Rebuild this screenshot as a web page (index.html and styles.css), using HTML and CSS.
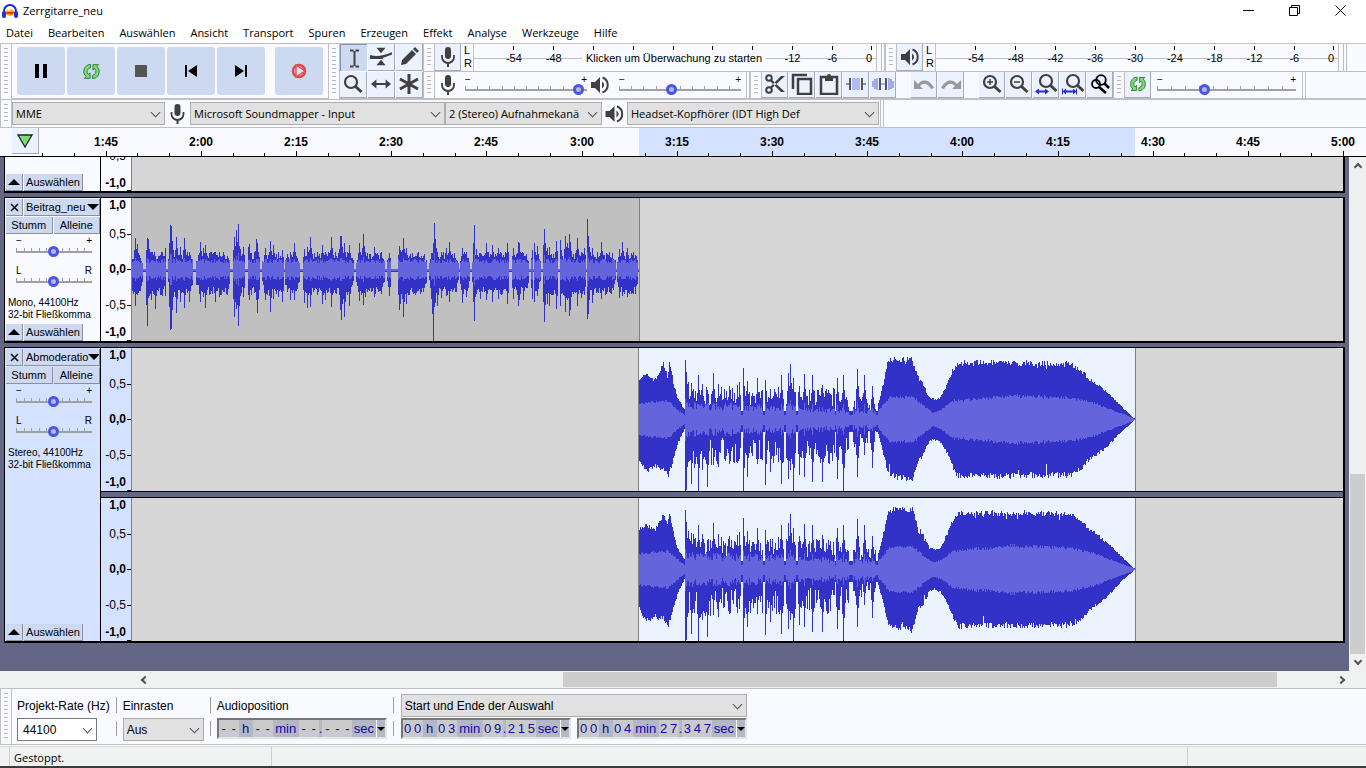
FILE: index.html
```html
<!DOCTYPE html>
<html lang="de">
<head>
<meta charset="utf-8">
<title>Zerrgitarre_neu</title>
<link rel="stylesheet" href="styles.css">
</head>
<body>
<svg class="defs" aria-hidden="true">
  <symbol id="mic" viewBox="0 0 16 20"><rect x="5" y="0" width="6" height="12" rx="3"/><path d="M2 8v2a6 6 0 0 0 12 0V8" fill="none" stroke="currentColor" stroke-width="1.8"/><path d="M7 15h2v5H7z"/></symbol>
  <symbol id="speaker" viewBox="0 0 20 20"><path d="M1 7h4l5-5v16l-5-5H1z"/><path d="M12 6.500a4 4 0 0 1 0 7z"/><path d="M12.500 2.500a8 8 0 0 1 0 15" fill="none" stroke="currentColor" stroke-width="2"/></symbol>
  <symbol id="loop" viewBox="0 0 18 18"><path d="M8 1.500A7.500 7.500 0 0 0 3.200 14.500L1.500 16.200H7.500V10.500L5.600 12.200A4.300 4.300 0 0 1 8 4.900z" fill="#7cdc78" stroke="#2f7a30"/><path d="M10 16.500A7.500 7.500 0 0 0 14.800 3.500L16.500 1.800H10.500V7.500L12.400 5.800A4.300 4.300 0 0 1 10 13.100z" fill="#7cdc78" stroke="#2f7a30"/></symbol>
  <symbol id="lens" viewBox="0 0 22 22"><circle cx="9" cy="9" r="6" fill="none" stroke="currentColor" stroke-width="2.200"/><path d="M13.500 13.500l6 5.500" stroke="currentColor" stroke-width="3"/></symbol>
</svg>

<header class="titlebar">
  <svg class="app-icon" viewBox="0 0 16 16"><path d="M3 9l2-2 2 1 2-2 3 2 2 1-2 3-4 1-4-1z" fill="#ffb000"/><path d="M4 9h8l-1 2H5z" fill="#f03010"/><path d="M2 10V8a6 6 0 0 1 12 0v2" fill="none" stroke="#1c22d0" stroke-width="2"/><rect x="0" y="8" width="4" height="7" rx="2" fill="#1c30f0"/><rect x="12" y="8" width="4" height="7" rx="2" fill="#1c30f0"/></svg>
  <h1>Zerrgitarre_neu</h1>
  <div class="window-buttons">
    <button aria-label="Minimieren"><svg viewBox="0 0 11 11"><path d="M0 5.500h11"/></svg></button>
    <button aria-label="Wiederherstellen"><svg viewBox="0 0 11 11"><path d="M.5 2.500h8v8h-8zM2.500 2.500v-2h8v8h-2"/></svg></button>
    <button aria-label="Schließen"><svg viewBox="0 0 11 11"><path d="M.5.5l10 10M10.500.5l-10 10"/></svg></button>
  </div>
</header>
<nav class="menubar">
  <button>Datei</button><button>Bearbeiten</button><button>Auswählen</button><button>Ansicht</button><button>Transport</button><button>Spuren</button><button>Erzeugen</button><button>Effekt</button><button>Analyse</button><button>Werkzeuge</button><button>Hilfe</button>
</nav>

<section class="toolbars">
  <div class="upper">
    <div class="grip"></div>
    <div class="transport">
      <button aria-label="Pause"><svg viewBox="0 0 20 20"><path d="M4 3h4v14H4zM12 3h4v14h-4z" fill="#000"/></svg></button>
      <button aria-label="Schleife"><svg viewBox="0 0 18 18"><use href="#loop"/></svg></button>
      <button aria-label="Stopp"><svg viewBox="0 0 20 20"><path d="M4 4h12v12H4z" fill="#555"/></svg></button>
      <button aria-label="Zum Anfang"><svg viewBox="0 0 20 20"><path d="M4 4h2v12H4zM16 4v12l-9-6z" fill="#000"/></svg></button>
      <button aria-label="Zum Ende"><svg viewBox="0 0 20 20"><path d="M14 4h2v12h-2zM4 4v12l9-6z" fill="#000"/></svg></button>
      <button class="record" aria-label="Aufnahme"><svg viewBox="0 0 20 20"><circle cx="10" cy="10" r="6" fill="none" stroke="#e04848" stroke-width="2.500"/><path d="M7 4l9 6-9 6z" fill="#dde2f4" stroke="#e04848" stroke-width="1.300"/></svg></button>
    </div>
    <div class="grip"></div>
    <div class="tools">
      <button class="pressed" aria-label="Auswahlwerkzeug"><svg viewBox="0 0 22 22"><path d="M7 3.500h3.500M12.500 3.500H16M7 19.500h3.500M12.500 19.500H16M11.500 4v15" fill="none" stroke="currentColor" stroke-width="2"/></svg></button>
      <button aria-label="Hüllkurve"><svg viewBox="0 0 24 22"><path d="M7 1h10l-5 6zM7 20h10l-5-6z"/><path d="M0 10c8 3 15 1 24-3M0 12h14" fill="none" stroke="currentColor" stroke-width="2.500"/></svg></button>
      <button aria-label="Zeichnen"><svg viewBox="0 0 22 22"><path d="M3 19l1-5L14 4l4 4L8 18zM15 3l2-2 4 4-2 2z"/></svg></button>
      <button aria-label="Zoom"><svg viewBox="0 0 22 22"><use href="#lens"/></svg></button>
      <button aria-label="Verschieben"><svg viewBox="0 0 24 22"><path d="M1 11l6-5v4h10V6l6 5-6 5v-4H7v4z"/></svg></button>
      <button aria-label="Multiwerkzeug"><svg viewBox="0 0 22 22"><path d="M11 1v20M2 6l18 10M2 16L20 6" stroke="currentColor" stroke-width="3"/></svg></button>
    </div>
    <div class="bars">
      <div class="bar">
        <div class="grip"></div>
        <button class="tool" aria-label="Aufnahmepegel"><svg viewBox="0 0 16 20"><use href="#mic"/></svg></button>
        <div class="lr"><span>L</span><span>R</span></div>
        <div class="meter">
          <span>-54</span><span>-48</span><span></span><span></span><span></span><span></span><span></span><span>-12</span><span>-6</span><span>0</span>
          <p class="hint">Klicken um Überwachung zu starten</p>
        </div>
        <div class="end"></div>
        <div class="grip"></div>
        <button class="tool" aria-label="Wiedergabepegel"><svg viewBox="0 0 20 20"><use href="#speaker"/></svg></button>
        <div class="lr"><span>L</span><span>R</span></div>
        <div class="meter">
          <span>-54</span><span>-48</span><span>-42</span><span>-36</span><span>-30</span><span>-24</span><span>-18</span><span>-12</span><span>-6</span><span>0</span>
        </div>
        <div class="end"></div>
      </div>
      <div class="bar">
        <div class="grip"></div>
        <svg class="mark" viewBox="0 0 16 20"><use href="#mic"/></svg>
        <label class="slider wide"><span>−</span><span>+</span><input type="range" aria-label="Aufnahmelautstärke" value="97"></label>
        <svg class="mark" viewBox="0 0 20 20"><use href="#speaker"/></svg>
        <label class="slider wide"><span>−</span><span>+</span><input type="range" aria-label="Wiedergabelautstärke" value="42"></label>
        <div class="end"></div>
        <div class="grip"></div>
        <div class="group">
          <button class="tool" aria-label="Ausschneiden"><svg viewBox="0 0 22 22"><circle cx="5" cy="5" r="2.800" fill="none" stroke="currentColor" stroke-width="2"/><circle cx="5" cy="17" r="2.800" fill="none" stroke="currentColor" stroke-width="2"/><path d="M7 6l14 13h-4L6 8zM7 16L21 3h-4L6 14z"/></svg></button>
          <button class="tool" aria-label="Kopieren"><svg viewBox="0 0 22 22"><path d="M2 16V2h14M7 6h13v15H7z" fill="none" stroke="currentColor" stroke-width="2.500"/></svg></button>
          <button class="tool" aria-label="Einfügen"><svg viewBox="0 0 22 22"><path d="M3 4h16v17H3z" fill="none" stroke="currentColor" stroke-width="2.500"/><path d="M7 3h2a2 2 0 0 1 4 0h2v5H7z"/></svg></button>
          <button class="tool" aria-label="Trimmen"><svg viewBox="0 0 22 22"><path d="M1 11h5M16 11h5" stroke="#6464dc" stroke-width="1.500"/><path d="M8 5v12M10 5v12M12 5v12M14 5v12" stroke="#7a84e8"/><path d="M5 5v12M17 5v12" stroke="#555" stroke-width="2"/></svg></button>
          <button class="tool" aria-label="Stille"><svg viewBox="0 0 22 22"><path d="M1 14V8M3 6v10M5 5v12M17 5v12M19 6v10M21 8v7" stroke="#7a84e8" stroke-width="1.300"/><path d="M8 11h6" stroke="#6464dc"/><path d="M8 5v12M14 5v12" stroke="#555" stroke-width="2"/></svg></button>
        </div>
        <div class="group dim">
          <button class="tool" aria-label="Rückgängig"><svg viewBox="0 0 22 22"><path d="M1 7v9h9l-3-3c4-4 8-2 11 3l3-1C17 7 10 5 5 11z"/></svg></button>
          <button class="tool" aria-label="Wiederholen"><svg viewBox="0 0 22 22"><path d="M21 7v9h-9l3-3c-4-4-8-2-11 3l-3-1C5 7 12 5 17 11z"/></svg></button>
        </div>
        <div class="group">
          <button class="tool" aria-label="Vergrößern"><svg viewBox="0 0 22 22"><use href="#lens"/><path d="M6 9h6M9 6v6" stroke="currentColor" stroke-width="1.500"/></svg></button>
          <button class="tool" aria-label="Verkleinern"><svg viewBox="0 0 22 22"><use href="#lens"/><path d="M6 9h6" stroke="currentColor" stroke-width="1.500"/></svg></button>
          <button class="tool" aria-label="Auswahl einpassen"><svg viewBox="0 0 22 22"><use href="#lens" x="2" y="-1"/><path d="M0 18.500l4-3v2h3v2H4v2zM14 18.500l-4-3v2H7v2h3v2z" fill="#2a2ad0"/></svg></button>
          <button class="tool" aria-label="Projekt einpassen"><svg viewBox="0 0 22 22"><use href="#lens" x="2" y="-1"/><path d="M0 15.500h1v2.500l3-2.500v2h7v-2l3 2.500v-2.500h1v6h-1V19l-3 2.500v-2H4v2L1 19v2.500H0z" fill="#2a2ad0"/></svg></button>
          <button class="tool" aria-label="Zoom umschalten"><svg viewBox="0 0 22 22"><g fill="none" stroke="#000" stroke-width="1.800"><circle cx="12" cy="7" r="4.800"/><circle cx="7" cy="11" r="4"/><path d="M15 10l5 5M10 14l7 6" stroke-width="2.600"/></g></svg></button>
        </div>
        <div class="grip"></div>
        <button class="tool" aria-label="Mit Geschwindigkeit abspielen"><svg viewBox="-2 -2 22 22"><use href="#loop" width="18" height="18"/></svg></button>
        <label class="slider speed"><span>−</span><span>+</span><input type="range" aria-label="Geschwindigkeit" value="33"></label>
        <div class="end"></div>
      </div>
    </div>
  </div>
  <div class="devices">
    <div class="grip"></div>
    <div class="combo host"><select aria-label="Audio-Host"><option>MME</option></select></div>
    <svg class="mark" viewBox="0 0 16 20"><use href="#mic"/></svg>
    <div class="combo input"><select aria-label="Aufnahmegerät"><option>Microsoft Soundmapper - Input</option></select></div>
    <div class="combo channels"><select aria-label="Aufnahmekanäle"><option>2 (Stereo) Aufnahmekanä</option></select></div>
    <svg class="mark" viewBox="0 0 20 20"><use href="#speaker"/></svg>
    <div class="combo output"><select aria-label="Wiedergabegerät"><option>Headset-Kopfhörer (IDT High Def</option></select></div>
    <div class="end"></div>
  </div>
</section>

<section class="timeline">
  <button class="pin" aria-label="Abspielkopf"><svg viewBox="0 0 16 14"><path d="M1 1h14L8 13z" fill="#7cdc78" stroke="#222" stroke-width="1.300"/></svg></button>
  <svg class="ruler" id="ruler"></svg>
</section>

<main class="workspace">
  <div class="tracks">
    <article class="track cut">
      <div class="panel"><div class="foot"><button aria-label="Einklappen"><i class="up"></i></button><button>Auswählen</button></div></div>
      <div class="lanes"><div class="lane"><div class="scale"><b>-0,5</b><b>-1,0</b></div><svg class="wave"></svg></div></div>
    </article>
    <article class="track">
      <div class="panel">
        <div class="head"><button aria-label="Schließen"><svg viewBox="0 0 9 9"><path d="M1 1l7 7M8 1L1 8"/></svg></button><button class="name">Beitrag_neu<i class="down"></i></button></div>
        <div class="pair"><button>Stumm</button><button>Alleine</button></div>
        <label class="slider"><span>−</span><span>+</span><input type="range" aria-label="Lautstärke" value="49"></label>
        <label class="slider"><span>L</span><span>R</span><input type="range" aria-label="Balance" value="49"></label>
        <p>Mono, 44100Hz<br>32-bit Fließkomma</p>
        <div class="foot"><button aria-label="Einklappen"><i class="up"></i></button><button>Auswählen</button></div>
      </div>
      <div class="lanes"><div class="lane"><div class="scale"><span>1,0</span><span>0,5</span><span>0,0</span><span>-0,5</span><span>-1,0</span></div><svg class="wave" data-clip="speech"></svg></div></div>
    </article>
    <article class="track selected">
      <div class="panel">
        <div class="head"><button aria-label="Schließen"><svg viewBox="0 0 9 9"><path d="M1 1l7 7M8 1L1 8"/></svg></button><button class="name">Abmoderatio<i class="down"></i></button></div>
        <div class="pair"><button>Stumm</button><button>Alleine</button></div>
        <label class="slider"><span>−</span><span>+</span><input type="range" aria-label="Lautstärke" value="49"></label>
        <label class="slider"><span>L</span><span>R</span><input type="range" aria-label="Balance" value="49"></label>
        <p>Stereo, 44100Hz<br>32-bit Fließkomma</p>
        <div class="foot"><button aria-label="Einklappen"><i class="up"></i></button><button>Auswählen</button></div>
      </div>
      <div class="lanes">
        <div class="lane"><div class="scale"><span>1,0</span><span>0,5</span><span>0,0</span><span>-0,5</span><span>-1,0</span></div><svg class="wave" data-clip="music" data-seed="7"></svg></div>
        <div class="lane"><div class="scale"><span>1,0</span><span>0,5</span><span>0,0</span><span>-0,5</span><span>-1,0</span></div><svg class="wave" data-clip="music" data-seed="23"></svg></div>
      </div>
    </article>
  </div>
  <div class="vscroll"><i class="chev north"></i><div class="thumb"></div><i class="chev south"></i></div>
</main>
<div class="hscroll"><i class="chev west"></i><div class="rail"><div class="thumb"></div></div><i class="chev east"></i></div>

<section class="selection">
  <div class="grip"></div>
  <div class="field"><label for="rate">Projekt-Rate (Hz)</label><div class="combo white rate"><select id="rate"><option>44100</option></select></div></div>
  <div class="rule"></div>
  <div class="field"><label for="snap">Einrasten</label><div class="combo snap"><select id="snap"><option>Aus</option></select></div></div>
  <div class="rule"></div>
  <div class="field"><span>Audioposition</span>
    <div class="time"><b>--</b><span class="w1">h</span><b>--</b><span class="w2">min</span><b>--</b><span>.</span><b>---</b><span class="w3">sec</span><button aria-label="Format"><i class="down"></i></button></div></div>
  <div class="rule"></div>
  <div class="field range">
    <div class="combo"><select aria-label="Auswahlmodus"><option>Start und Ende der Auswahl</option></select></div>
    <div class="times">
      <div class="time"><b>00</b><span class="w1">h</span><b>03</b><span class="w2">min</span><b>09</b><span>.</span><b>215</b><span class="w3">sec</span><button aria-label="Format"><i class="down"></i></button></div>
      <div class="time"><b>00</b><span class="w1">h</span><b>04</b><span class="w2">min</span><b>27</b><span>.</span><b>347</b><span class="w3">sec</span><button aria-label="Format"><i class="down"></i></button></div>
    </div>
  </div>
</section>
<footer class="status"><span></span><span class="state">Gestoppt.</span><span class="mid"></span><span class="last"></span></footer>
<script src="app.js"></script>
</body>
</html>
```
FILE: styles.css
```css
* { box-sizing: border-box; }
body { margin: 0; height: 100vh; display: flex; flex-direction: column; overflow: hidden; background: #f9faff; color: #000; font: 11px/16px "Open Sans", "Noto Sans", sans-serif; }
button, select, input { font: inherit; color: inherit; margin: 0; padding: 0; border: 0; background: none; border-radius: 0; }
h1, p { margin: 0; font: inherit; }
svg { display: block; fill: currentColor; }
.defs { position: absolute; width: 0; height: 0; }

.titlebar { flex: none; height: 23px; display: flex; align-items: center; background: #fff; padding: 0 3px 2px 2px; }
.app-icon { width: 16px; height: 16px; margin-right: 5px; }
.window-buttons { margin-left: auto; display: flex; }
.window-buttons button { width: 46px; height: 20px; display: grid; place-items: center; }
.window-buttons svg { width: 11px; height: 11px; fill: none; stroke: #000; }
.menubar { flex: none; height: 20px; display: flex; gap: 15px; padding: 0 6px; background: #fff; }

.toolbars { flex: none; border-top: 1px solid #bfbfbf; color: #404040; }
.upper { display: flex; height: 55px; }
.grip { flex: none; width: 12px; border: solid #c0c0c0; border-width: 0 1px; background: repeating-linear-gradient(#b8b8b8 0 1px, transparent 1px 4px) 3px 4px / 4px calc(100% - 8px) no-repeat; }
.end { flex: none; width: 4px; border: solid #c0c0c0; border-width: 0 1px; }
.transport { display: flex; gap: 2px; align-items: center; padding: 0 5px; border-bottom: 1px solid #c0c0c0; }
.transport button { width: 48px; height: 48px; border-radius: 3px; background: #ccd9f0; display: grid; place-items: center; }
.transport svg { width: 20px; height: 20px; }
.transport button:nth-child(2) svg { width: 17px; height: 17px; }
.transport .record { margin-left: 8px; }
.tools { display: grid; grid-template: 1fr 1fr / repeat(3, 27px); gap: 1px; border-bottom: 1px solid #c0c0c0; }
.tools button, .tool { background: #ebf1fe; border: solid #a4acbc; border-width: 0 1px 1px 0; display: grid; place-items: center; }
.tools .pressed { background: #ccd9f0; border-width: 1px 0 0 1px; border-color: #8494b0; }
.tools svg, .tool svg { width: 22px; height: 22px; }
.bar .tool:not(.group .tool) svg { width: 20px; height: 20px; }
.bars { flex: 1; min-width: 0; display: grid; grid-template-rows: 1fr 1fr; }
.bar { display: flex; border-bottom: 1px solid #c0c0c0; min-width: 0; }
.tool { flex: none; width: 26px; }
.group { display: flex; gap: 1px; margin-right: 15px; }
.group + .grip { margin-left: -15px; }
.group.dim { color: #999; }
.mark { flex: none; align-self: center; width: 20px; height: 20px; }
.lr { width: 12px; padding: 0 3px; display: flex; flex-direction: column; color: #000; font: 11px/13px "Liberation Sans", sans-serif; }
.meter { position: relative; flex: 0 1 404px; display: flex; padding: 2px 4px 0 20px; margin-right: 4px; color: #000; font: 11px/12px "Liberation Sans", sans-serif; background: linear-gradient(#c0c0c0, #c0c0c0) 0 14px / 100% 1px no-repeat; border: solid #c0c0c0; border-width: 0 1px; }
.meter span { flex: 2 1 0; text-align: center; padding-top: 6px; background: linear-gradient(#000, #000) center top / 1px 4px no-repeat; }
.meter span:nth-child(10) { flex-grow: 1; text-align: right; background-position: right top; }
.hint { position: absolute; left: 108px; top: 6px; padding: 2px 4px; background: #f9faff; white-space: nowrap; }

.slider { display: grid; grid-template-columns: 1fr 1fr; width: 76px; color: #000; font: 10px/10px "Liberation Sans", sans-serif; }
.slider span:nth-child(2) { text-align: right; }
.slider input { grid-column: 1 / 3; appearance: none; width: 100%; height: 11px; background: linear-gradient(#a0a0a0, #a0a0a0) 0 5px / 100% 2px no-repeat, repeating-linear-gradient(90deg, #a0a0a0 0 1px, transparent 1px 10%) 0 2px / 100% 3px no-repeat; }
.slider input::-webkit-slider-thumb { appearance: none; width: 11px; height: 11px; border-radius: 50%; border: 3px solid #4a54e8; background: #b4b8dc; }
.wide, .speed { align-self: center; width: 122px; flex: none; line-height: 9px; }
.bar .mark { margin: 0 7px 0 3px; }
.bar .wide + .mark { margin-right: 9px; }
.wide + .end { margin-left: 5px; }
.speed { width: 139px; margin: 0 6px; }

.devices { display: flex; align-items: center; height: 29px; border: solid #c0c0c0; border-width: 1px 0; }
.devices .grip, .devices .end { align-self: stretch; }
.devices .mark { width: 21px; margin: 0 2px; }
.combo { position: relative; height: 23px; }
.combo select { appearance: none; width: 100%; height: 100%; padding: 0 20px 0 3px; color: #000; background: #e1e1e1; border: 1px solid #adadad; overflow: hidden; }
.combo::after { content: ""; position: absolute; right: 6px; top: 7px; width: 6px; height: 6px; border: solid #555; border-width: 0 1px 1px 0; transform: rotate(45deg); pointer-events: none; }
.host { width: 153px; } .input { width: 255px; } .channels { width: 157px; } .output { width: 252px; margin-right: 1px; }
.white select { background: #fff; border-color: #7a7a7a; padding-left: 5px; }

.timeline { flex: none; display: flex; height: 29px; border-bottom: 1px solid #000; padding-left: 12px; }
.pin { flex: none; width: 27px; height: 26px; background: #ebf1fe; border: solid #a4acbc; border-width: 0 1px 1px 0; display: grid; place-items: center; }
.pin svg { width: 16px; height: 14px; }
.ruler { flex: 1; min-width: 0; height: 28px; font: bold 12px "Liberation Sans", sans-serif; }

.workspace { flex: 1; min-height: 0; display: flex; background: #636684; }
.tracks { flex: 1; min-width: 0; padding: 0 4px; display: flex; flex-direction: column; gap: 4px; overflow: hidden; }
.track { flex: none; display: flex; border: 1px solid #000; border-right-width: 2px; border-bottom-width: 2px; background: #f9faff; }
.track.cut { height: 36px; border-top: 0; overflow: hidden; }
.panel { width: 96px; padding: 1px 0 0 1px; border-right: 1px solid #000; display: flex; flex-direction: column; align-items: stretch; font: 11px/16px "Liberation Sans", sans-serif; }
.selected .panel, .selected .scale { background-color: #d4e2ff; }
.panel button { height: 17px; background: #ccd9f0; border: solid #8a909c; border-width: 0 1px 1px 0; overflow: hidden; white-space: nowrap; }
.head, .pair, .foot { display: flex; gap: 1px; margin-bottom: 1px; }
.head button:first-child, .foot button:first-child { width: 17px; display: grid; place-items: center; }
.head svg { width: 9px; height: 9px; fill: none; stroke: #000; stroke-width: 1.500; }
.panel .name { flex: 1; display: flex; align-items: center; justify-content: space-between; padding: 0 0 0 2px; }
.pair button { flex: 1; }
.foot { margin: auto 0 0; }
.foot button:last-child { width: 59px; }
.panel .slider { margin: 0 0 9px 10px; width: 76px; }
.panel .pair + .slider { margin-top: 1px; }
.panel p { font-size: 10px; line-height: 12px; padding: 1px 0 0 2px; white-space: nowrap; }
.up { border: solid transparent; border-width: 0 6px 6px; border-bottom-color: #000; }
.down { border: solid transparent; border-width: 6px 6px 0; border-top-color: #000; }
.lanes { flex: 1; min-width: 0; display: flex; flex-direction: column; gap: 7px; background: #636684; }
.lane { display: flex; height: 143px; background: #f9faff; }
.lane:not(:last-child) { box-shadow: 0 1px #000; }
.lane + .lane { box-shadow: 0 -1px #000; }
.scale { flex: none; width: 31px; border-right: 1px solid #808080; padding-right: 5px; display: flex; flex-direction: column; align-items: flex-end; font: 12px/15px "Liberation Sans", sans-serif; background-image: linear-gradient(#000, #000), linear-gradient(#000, #000), linear-gradient(#000, #000), linear-gradient(#000, #000); background-size: 4px 1px; background-repeat: no-repeat; background-position: right 36px, right 71px, right 107px, right 142px; }
.scale span:nth-child(odd) { font-weight: bold; }
.scale span:nth-child(2) { margin-top: 14px; }
.scale span:nth-child(3) { margin-top: 20px; }
.scale span:nth-child(4) { margin-top: 21px; }
.scale span:nth-child(5) { margin-top: 12px; }
.cut .lane { height: 34px; overflow: hidden; }
.cut .scale { justify-content: flex-end; gap: 12px; background: linear-gradient(#000, #000) right bottom / 4px 1px no-repeat; }
.cut b:first-child { font-weight: normal; }
.wave { flex: 1; min-width: 0; height: 143px; background: #d6d6d6; shape-rendering: crispEdges; }

.vscroll { flex: none; width: 17px; background: #f0f0f0; display: flex; flex-direction: column; align-items: center; justify-content: flex-end; }
.vscroll .thumb { width: 15px; height: 35%; background: #cdcdcd; }
.chev { width: 6px; height: 6px; border: solid #555; border-width: 2px 0 0 2px; }
.north { transform: rotate(45deg); margin: 7px 0 auto; }
.south { transform: rotate(225deg); margin: 4px 0 7px; }
.west { transform: rotate(-45deg); }
.east { transform: rotate(135deg); }
.hscroll { flex: none; height: 17px; display: flex; align-items: center; background: #f0f1f1; padding: 0 22px 0 142px; gap: 4px; }
.rail { flex: 1; height: 15px; display: flex; justify-content: flex-end; padding-right: 57px; }
.rail .thumb { width: 63.5%; background: #cdcdcd; }

.selection { flex: none; height: 57px; display: flex; border: solid #c0c0c0; border-width: 1px 0; font: 12px/16px "Liberation Sans", sans-serif; }
.field { display: grid; grid-template-rows: 24px 23px; padding-top: 5px; }
.selection > .grip + .field { padding-left: 5px; }
.field > label, .field > span { padding-top: 4px; }
.rule { width: 13px; margin: 8px 0; background: linear-gradient(#a0a0a0 0 16px, transparent 16px 24px, #a0a0a0 24px) center / 1px 100% no-repeat; }
.rate { width: 80px; } .snap { width: 81px; }
.range { padding-left: 1px; }
.times { display: flex; gap: 6px; }
.time { display: flex; width: 170px; height: 21px; border: 2px solid #777; border-color: #777 #e4e4e4 #e4e4e4 #777; background: #b4b8c4; color: #0a0aa8; font-size: 13px; line-height: 18px; }
.time b { font-weight: normal; background: #cacaca; display: flex; }
.time i.digit { font-style: normal; width: 10px; text-align: center; }
.time > span { flex: none; text-align: center; }
.w1 { width: 14px; } .w2 { width: 26px; } .w3 { width: 23px; }
.time button { margin-left: auto; width: 9px; border-left: 1px solid #fff; display: grid; place-items: center; }
.time .down { border-width: 4px 4px 0; border-top-color: #000; }

.status { flex: none; height: 22px; margin-top: 1px; display: flex; background: #f0f1f1; border-bottom: 2px solid #3c3c3c; border-top: 1px solid #d8d8d8; }
.status span { width: 10px; border-right: 1px solid #d0d0d0; line-height: 21px; }
.status .state { width: 262px; padding-left: 4px; }
.status .mid { flex: 1; }
.status .last { width: 178px; border: 0; }
```
FILE: app.js
```js
const DARK = '#3232c8', LIGHT = '#6464dc', MID = 71.5, LEFT = 132;

// Horizontal ruler: five seconds per tick, labels every fifteen.
(function () {
  let s = '<rect x="600" y="0" width="496" height="28" fill="#d4e2ff"/>';
  for (let t = 95; t <= 300; t += 5) {
    const x = Math.round(105.6 + (t - 105) * 6.346) - 39;
    const big = t % 15 === 0;
    s += `<path d="M${x}.5 ${big ? 23 : 25}V28" stroke="#000"/>`;
    if (big) s += `<text x="${x}" y="18" text-anchor="middle">${Math.floor(t / 60)}:${String(t % 60).padStart(2, '0')}</text>`;
  }
  document.getElementById('ruler').innerHTML = s;
})();

function random(seed) {
  return () => { seed = (seed * 16807) % 2147483647; return seed / 2147483647; };
}
// Linear interpolation over [x, value...] rows.
function at(rows, x, k) {
  for (let i = 1; i < rows.length; i++) {
    if (x <= rows[i][0]) {
      const a = rows[i - 1], b = rows[i];
      return a[k] + (b[k] - a[k]) * (x - a[0]) / (b[0] - a[0]);
    }
  }
  return rows[rows.length - 1][k];
}
const speechPeaks = [[135,32,36],[137,26,25],[147,32,56],[148,31,28],[151,18,30],[155,14,39],[162,18,26],[165,22,26],[170,45,60],[171,44,59],[176,33,43],[180,23,32],[184,32,38],[189,18,32],[200,28,32],[203,22,27],[205,25,38],[215,18,32],[219,18,27],[227,14,25],[234,33,47],[236,40,39],[238,46,56],[239,24,36],[243,23,27],[247,34,37],[249,26,30],[256,31,30],[257,27,43],[265,22,30],[270,29,42],[273,25,29],[278,18,27],[282,20,32],[290,18,30],[294,27,30],[304,21,33],[307,23,38],[310,33,37],[322,25,34],[325,18,30],[331,33,37],[340,34,40],[341,34,50],[344,27,47],[349,25,36],[359,27,31],[363,36,35],[365,18,27],[374,23,27],[381,18,24],[389,17,26],[399,24,40],[400,20,34],[403,32,47],[406,22,34],[412,17,22],[423,14,22],[431,17,29],[433,27,71],[434,47,37],[437,18,36],[441,18,28],[446,22,26],[449,28,32],[452,16,22],[462,22,33],[466,18,27],[474,45,51],[475,15,27],[480,17,29],[486,27,30],[492,25,32],[498,22,29],[507,27,34],[513,22,29],[518,28,36],[519,27,30],[523,17,30],[532,20,29],[534,27,32],[537,24,26],[544,41,52],[547,22,34],[549,23,36],[556,29,39],[560,30,36],[565,34,42],[567,27,30],[569,36,46],[570,28,40],[577,32,36],[581,18,28],[584,22,25],[587,51,49],[588,34,44],[592,22,33],[597,18,22],[601,28,29],[606,17,24],[619,21,28],[622,28,26],[627,22,27],[631,17,24],[635,15,24]];
const speechGaps = [[143,145],[166,167],[193,195],[230,232],[245,247],[260,261],[284,284],[300,302],[354,355],[385,386],[391,397],[427,428],[459,459],[470,471],[509,511],[529,530],[533,533],[541,542],[558,559],[586,586],[616,616],[638,639]];
const musicPeaks = [[685,60,71],[686,48,70],[691,37,64],[698,45,71],[702,36,50],[707,30,67],[713,47,45],[718,36,47],[729,34,44],[737,35,43],[739,38,39],[743,52,71],[747,39,57],[751,24,33],[757,42,44],[765,40,65],[770,31,52],[778,33,42],[781,45,64],[788,47,59],[790,56,50],[793,42,71],[799,34,55],[804,46,57],[812,45,62],[817,30,30],[822,35,62],[828,30,43],[837,42,59],[843,45,71],[847,20,30],[857,51,57],[864,45,35],[872,34,48]];
const musicGaps = [[741,742],[763,764],[784,785],[796,797],[835,835],[849,852],[876,877]];
const musicShape = [[639,42,40],[642,43,46],[646,45,52],[655,40,48],[663,56,50],[667,44,56],[669,57,54],[673,38,40],[677,22,25],[684,10,10],[685,28,36],[700,25,34],[740,22,32],[790,22,32],[835,23,32],[850,16,24],[878,16,15],[884,40,38],[887,57,52],[892,61,57],[912,60,61],[917,44,44],[923,35,35],[929,22,22],[934,20,20],[940,22,23],[947,36,34],[953,52,50],[958,57,57],[1010,57,57],[1071,56,56],[1080,49,50],[1090,40,40],[1107,27,27],[1120,14,13],[1134,1,1]];
const musicRms = [[639,16],[668,19],[676,11],[684,5],[686,14],[790,12],[850,9],[878,9],[890,23],[913,23],[922,15],[933,7],[941,10],[953,19],[1013,24],[1071,22],[1093,17],[1113,9],[1134,1]];

function build(kind, seed) {
  const rnd = random(seed), speech = kind === 'speech';
  const from = speech ? 132 : 639, to = speech ? 639 : 1135;
  const peaks = speech ? speechPeaks : musicPeaks, gaps = speech ? speechGaps : musicGaps;
  const exact = new Map(peaks.map(p => [p[0], p]));
  let dark = '', light = '';
  for (let x = from; x < to; x++) {
    const spiky = speech || (x >= 685 && x < 878);
    let up, down;
    if (speech) {
      // Words fade in and out around each pause.
      const near = Math.min(...gaps.map(g => x < g[0] ? g[0] - x : x > g[1] ? x - g[1] : 0));
      const fade = Math.min(1, 0.45 + near * 0.15);
      up = (10 + rnd() * 8) * fade; down = (17 + rnd() * 9) * fade;
    } else {
      const n = spiky ? 0.55 + rnd() * 0.85 : 0.94 + rnd() * 0.1;
      const m = spiky ? 0.55 + rnd() * 0.85 : 0.93 + rnd() * 0.11;
      up = at(musicShape, x, 1) * n; down = at(musicShape, x, 2) * m;
    }
    if (!spiky && x > 886 && x < 1080 && rnd() > 0.95) { down -= 9 * rnd(); up -= 5 * rnd(); }
    let rms = speech ? 6 + rnd() * 5 : at(musicRms, x, 1) * (spiky ? 0.65 + rnd() * 0.6 : 0.9 + rnd() * 0.16);
    if (gaps.some(g => x >= g[0] && x <= g[1])) {
      up = speech ? 1 : 9; down = speech ? 2 : 12; rms = speech ? 1 : 5;
    } else if (exact.has(x)) {
      up = exact.get(x)[1]; down = exact.get(x)[2]; rms = Math.max(rms, up * 0.35);
    } else if (spiky) {
      for (const [d, k] of [[-2, 0.45], [-1, 0.65], [1, 0.6]]) {
        const p = exact.get(x + d);
        if (p) { up = Math.max(up, p[1] * k); down = Math.max(down, p[2] * k * 1.05); }
      }
    }
    rms = Math.min(rms, up, down);
    const px = x - LEFT;
    dark += `M${px} ${Math.round(MID - up)}h1V${Math.round(MID + down)}h-1z`;
    light += `M${px} ${Math.round(MID - rms)}h1V${Math.round(MID + rms)}h-1z`;
  }
  const w = to - from, bg = speech ? '#c0c0c0' : '#ebf3ff';
  return `<rect x="${from - LEFT}" width="${w}" height="143" fill="${bg}"/>` +
    `<path d="${dark}" fill="${DARK}"/><path d="${light}" fill="${LIGHT}"/>` +
    `<rect x="${(speech ? to : from - 1) - LEFT}" width="1" height="143" fill="#808080"/>` +
    (speech ? '' : `<rect x="${to - LEFT}" width="1" height="143" fill="#808080"/>`);
}
document.querySelectorAll('.wave[data-clip]').forEach(el => {
  el.innerHTML = build(el.dataset.clip, Number(el.dataset.seed || 11));
});

// Digits sit in equal cells, one for each figure.
document.querySelectorAll('.time b').forEach(b => {
  b.innerHTML = [...b.textContent].map(c => `<i class="digit">${c}</i>`).join('');
});
```
